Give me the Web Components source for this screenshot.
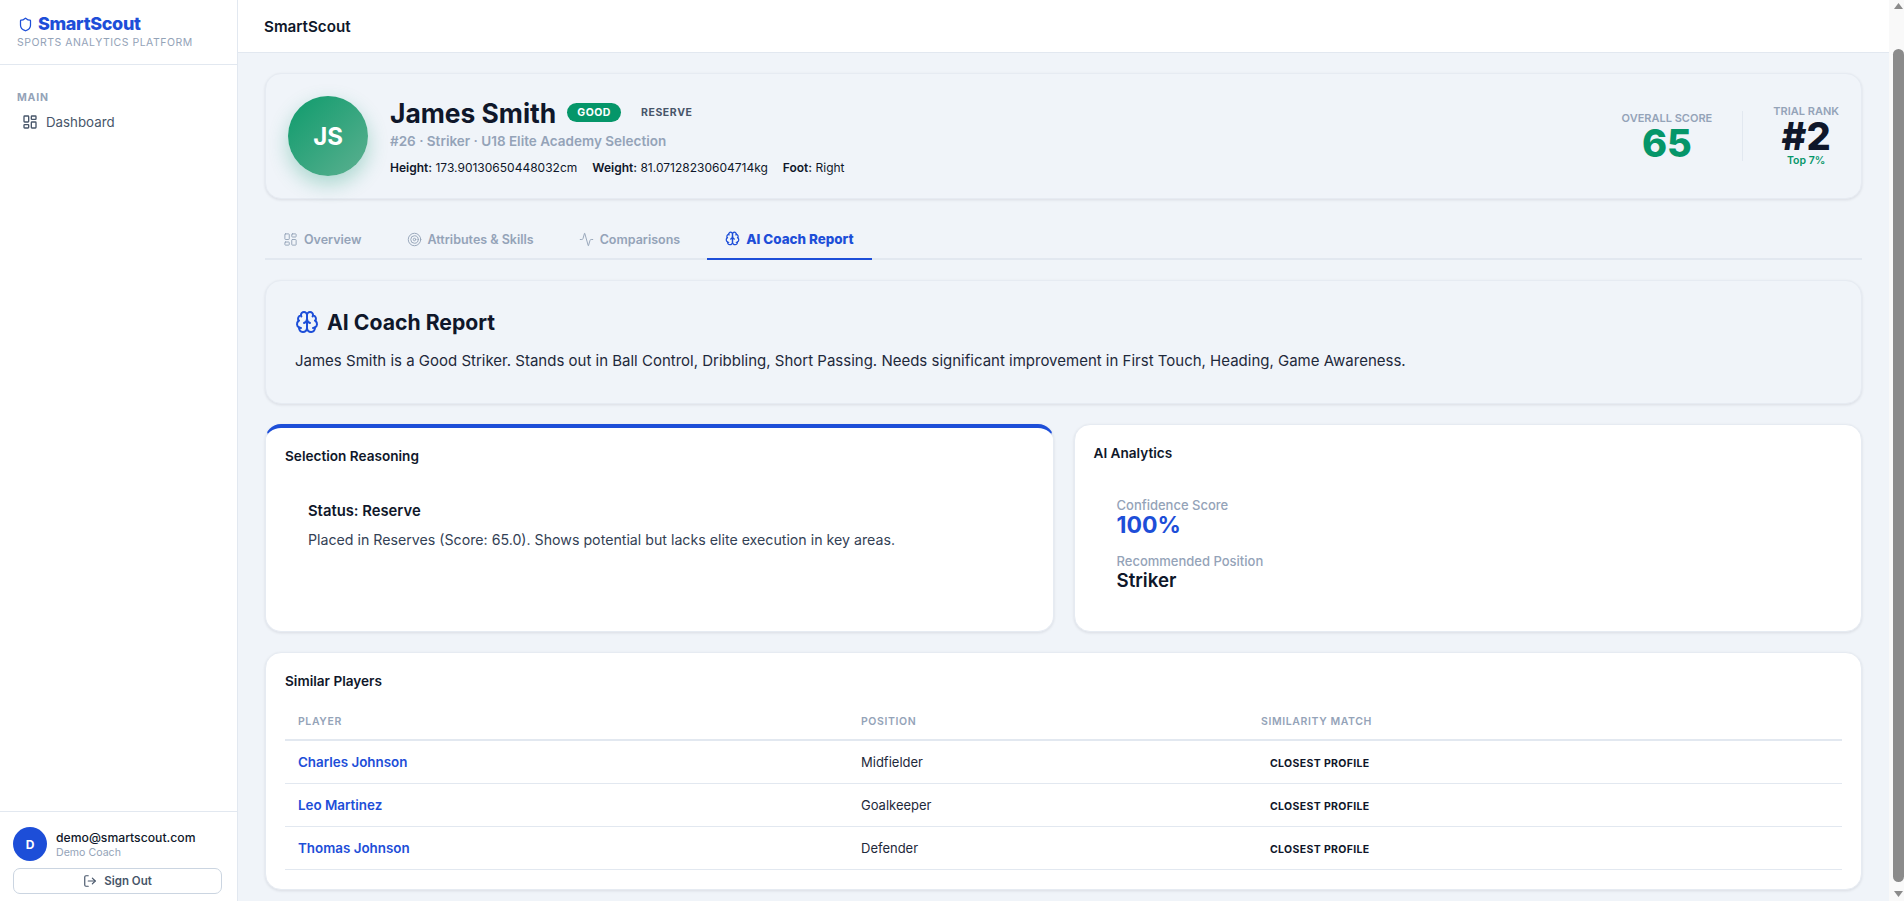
<!DOCTYPE html>
<html lang="en">
<head>
<meta charset="utf-8">
<title>SmartScout</title>
<style>
  html, body { margin: 0; height: 100%; overflow: hidden; }
  body { font-family: Inter, "Liberation Sans", sans-serif; color: #0f172a; background: #f0f4f9; }
</style>
</head>
<body>
<app-shell>
  <app-sidebar slot="side"></app-sidebar>
  <top-bar slot="top">SmartScout</top-bar>
  <scroll-rail slot="rail"></scroll-rail>

  <player-hero></player-hero>
  <tab-bar></tab-bar>

  <report-summary>James Smith is a Good Striker. Stands out in Ball Control, Dribbling, Short Passing. Needs significant improvement in First Touch, Heading, Game Awareness.</report-summary>

  <two-cols>
    <info-card heading="Selection Reasoning" accent>
      <reason-block status="Status: Reserve">Placed in Reserves (Score: 65.0). Shows potential but lacks elite execution in key areas.</reason-block>
    </info-card>
    <info-card heading="AI Analytics">
      <ai-stats></ai-stats>
    </info-card>
  </two-cols>

  <info-card heading="Similar Players">
    <similar-table></similar-table>
  </info-card>
</app-shell>

<script>
// lucide style icons, all on a 24 box
const ICONS = {
  shield: '<path d="M20 13c0 5-3.5 7.5-7.66 8.95a1 1 0 0 1-.67-.01C7.5 20.5 4 18 4 13V6a1 1 0 0 1 1-1c2 0 4.5-1.2 6.24-2.72a1.17 1.17 0 0 1 1.52 0C14.51 3.81 17 5 19 5a1 1 0 0 1 1 1z"/>',
  dashboard: '<rect width="7" height="9" x="3" y="3" rx="1"/><rect width="7" height="5" x="14" y="3" rx="1"/><rect width="7" height="9" x="14" y="12" rx="1"/><rect width="7" height="5" x="3" y="16" rx="1"/>',
  logout: '<path d="m16 17 5-5-5-5"/><path d="M21 12H9"/><path d="M9 21H5a2 2 0 0 1-2-2V5a2 2 0 0 1 2-2h4"/>',
  target: '<circle cx="12" cy="12" r="10"/><circle cx="12" cy="12" r="6"/><circle cx="12" cy="12" r="2"/>',
  activity: '<path d="M22 12h-2.48a2 2 0 0 0-1.93 1.46l-2.35 8.36a.25.25 0 0 1-.48 0L9.24 2.18a.25.25 0 0 0-.48 0l-2.35 8.36A2 2 0 0 1 4.49 12H2"/>',
  brain: '<path d="M12 5a3 3 0 1 0-5.997.125 4 4 0 0 0-2.526 5.77 4 4 0 0 0 .556 6.588A4 4 0 1 0 12 18Z"/><path d="M12 5a3 3 0 1 1 5.997.125 4 4 0 0 1 2.526 5.77 4 4 0 0 1-.556 6.588A4 4 0 1 1 12 18Z"/><path d="M15 13a4.5 4.5 0 0 1-3-4 4.5 4.5 0 0 1-3 4"/><path d="M17.599 6.5a3 3 0 0 0 .399-1.375"/><path d="M6.003 5.125A3 3 0 0 0 6.401 6.5"/><path d="M3.477 10.896a4 4 0 0 1 .585-.396"/><path d="M19.938 10.5a4 4 0 0 1 .585.396"/><path d="M6 18a4 4 0 0 1-1.967-.516"/><path d="M19.967 17.484A4 4 0 0 1 18 18"/>'
};

function icon(name, size, width) {
  return `<svg width="${size}" height="${size}" viewBox="0 0 24 24" fill="none" stroke="currentColor" stroke-width="${width || 2}" stroke-linecap="round" stroke-linejoin="round">${ICONS[name]}</svg>`;
}

// small helper, every element here is just a shadow root with static markup
class Base extends HTMLElement {
  connectedCallback() {
    if (this.shadowRoot) return;
    this.attachShadow({ mode: "open" });
    this.shadowRoot.innerHTML = this.render();
  }
}

class AppShell extends Base {
  render() {
    return `
    <style>
      :host { display: grid; grid-template-columns: 238px 1fr 15px; height: 901px; overflow: hidden; }
      .main { min-width: 0; }
      .content { display: flex; flex-direction: column; gap: 20px; padding: 20px 27px 0; }
    </style>
    <slot name="side"></slot>
    <div class="main">
      <slot name="top"></slot>
      <div class="content"><slot></slot></div>
    </div>
    <slot name="rail"></slot>`;
  }
}

// headless chrome drops native scrollbars, so the bar in the picture is drawn
class ScrollRail extends Base {
  render() {
    return `
    <style>
      :host { display: flex; flex-direction: column; align-items: flex-end; height: 901px; background: #f9f9f9; }
      svg { display: block; flex: none; fill: #8b8b8b; margin-right: 1px; }
      .up { margin-top: 3px; }
      .thumb { width: 11px; height: 833px; margin-top: 40px; border-radius: 6px; background: #8b8b8b; }
      .down { margin-top: 9px; }
    </style>
    <svg class="up" width="9" height="6" viewBox="0 0 9 6"><path d="M4.5 0 9 6H0z"/></svg>
    <div class="thumb"></div>
    <svg class="down" width="9" height="6" viewBox="0 0 9 6"><path d="M0 0h9L4.5 6z"/></svg>`;
  }
}

class AppSidebar extends Base {
  render() {
    return `
    <style>
      :host { display: flex; flex-direction: column; height: 901px; box-sizing: border-box; background: #fff; border-right: 1px solid #e2e8f0; }
      .brand { height: 65px; box-sizing: border-box; border-bottom: 1px solid #e2e8f0; padding: 13px 17px 0 18px; }
      .logo { display: flex; align-items: center; gap: 5px; color: #1d4ed8; font-size: 18px; font-weight: 800; line-height: 22px; letter-spacing: -0.35px; }
      .sub { font-size: 10.5px; line-height: 14px; letter-spacing: 0.5px; color: #94a3b8; margin: 1px 0 0 -1px; }
      nav { flex: 1; padding: 26px 17px 0; }
      .label { font-size: 10.5px; font-weight: 700; letter-spacing: 0.8px; color: #94a3b8; line-height: 14px; }
      .item { display: flex; align-items: center; gap: 8px; margin: 7px 0 0 5px; font-size: 13.3px; line-height: 20px; color: #475569; }
      .user { border-top: 1px solid #e2e8f0; padding: 15px 15px 7px 13px; }
      .who { display: flex; align-items: center; gap: 9px; }
      .avatar { width: 34px; height: 34px; border-radius: 50%; background: #1d4ed8; color: #fff; font-size: 12px; font-weight: 700; display: flex; align-items: center; justify-content: center; }
      .mail { font-size: 12.2px; font-weight: 500; line-height: 16px; }
      .role { font-size: 10.6px; line-height: 13px; color: #94a3b8; }
      .out { display: flex; align-items: center; justify-content: center; gap: 7px; height: 24px; margin-top: 7px; border: 1px solid #cbd5e1; border-radius: 7px; font-size: 11.5px; font-weight: 600; color: #475569; }
    </style>
    <div class="brand">
      <div class="logo">${icon("shield", 15)}SmartScout</div>
      <div class="sub">SPORTS ANALYTICS PLATFORM</div>
    </div>
    <nav>
      <div class="label">MAIN</div>
      <div class="item">${icon("dashboard", 16)}Dashboard</div>
    </nav>
    <div class="user">
      <div class="who">
        <div class="avatar">D</div>
        <div><div class="mail">demo@smartscout.com</div><div class="role">Demo Coach</div></div>
      </div>
      <div class="out">${icon("logout", 14)}Sign Out</div>
    </div>`;
  }
}

class TopBar extends Base {
  render() {
    return `
    <style>
      :host { display: flex; align-items: center; height: 53px; box-sizing: border-box; padding: 0 27px 0 26px; background: #fff; border-bottom: 1px solid #e2e8f0; font-size: 15.2px; font-weight: 600; color: #0f172a; }
    </style>
    <slot></slot>`;
  }
}

class PlayerHero extends Base {
  render() {
    return `
    <style>
      :host { display: flex; align-items: center; height: 126px; box-sizing: border-box; padding: 0 22px; border: 1px solid #e6ebf2; border-radius: 16px; background: #f0f4f9; box-shadow: 0 1px 3px rgba(15,23,42,.1); }
      .avatar { width: 80px; height: 80px; flex: none; border-radius: 50%; background: linear-gradient(135deg, #0e9b6c, #5cb090); color: #fff; font-size: 24px; font-weight: 700; display: flex; align-items: center; justify-content: center; box-shadow: 0 8px 20px rgba(5,150,105,.3); }
      .info { margin-left: 22px; flex: 1; }
      .line { display: flex; align-items: center; }
      h1 { margin: 0; font-size: 26.4px; font-weight: 700; line-height: 34px; color: #0f172a; }
      .good { margin-left: 11px; background: #059669; color: #fff; font-size: 10.5px; font-weight: 700; letter-spacing: .5px; padding: 0 10px; line-height: 19px; border-radius: 10px; }
      .res { margin-left: 20px; font-size: 10.5px; font-weight: 700; letter-spacing: .6px; color: #475569; }
      .meta { font-size: 13.5px; font-weight: 600; line-height: 20px; color: #94a3b8; margin-top: 1px; }
      .facts { display: flex; gap: 15px; font-size: 12px; line-height: 18px; margin-top: 8px; }
      b { font-weight: 600; }
      .stat { text-align: center; }
      .cap { font-size: 11px; font-weight: 600; color: #94a3b8; line-height: 13px; }
      .score { font-size: 38px; font-weight: 800; line-height: 36px; color: #059669; }
      .rank { font-size: 38px; font-weight: 800; line-height: 36px; color: #0f172a; }
      .top { font-size: 10.5px; font-weight: 600; color: #059669; line-height: 12px; margin-top: 1px; }
      .sep { width: 1px; height: 50px; background: #e2e8f0; margin: 0 30px; }
    </style>
    <div class="avatar">JS</div>
    <div class="info">
      <div class="line"><h1>James Smith</h1><span class="good">GOOD</span><span class="res">RESERVE</span></div>
      <div class="meta">#26 · Striker · U18 Elite Academy Selection</div>
      <div class="facts">
        <span><b>Height:</b> 173.90130650448032cm</span>
        <span><b>Weight:</b> 81.07128230604714kg</span>
        <span><b>Foot:</b> Right</span>
      </div>
    </div>
    <div class="stat"><div class="cap">OVERALL SCORE</div><div class="score">65</div></div>
    <div class="sep"></div>
    <div class="stat"><div class="cap">TRIAL RANK</div><div class="rank">#2</div><div class="top">Top 7%</div></div>`;
  }
}

class TabBar extends Base {
  render() {
    return `
    <style>
      :host { display: flex; height: 41px; box-sizing: border-box; border-bottom: 2px solid #e2e8f0; }
      .tab { display: flex; align-items: center; gap: 6px; height: 41px; box-sizing: border-box; padding: 0 18px; font-size: 12.5px; font-weight: 600; color: #94a3b8; }
      .tab + .tab { margin-left: 9px; }
      .on { color: #1d4ed8; border-bottom: 2px solid #1d4ed8; font-size: 13.4px; font-weight: 800; }
    </style>
    <div class="tab">${icon("dashboard", 15, 1.5)}Overview</div>
    <div class="tab">${icon("target", 15, 1.5)}Attributes &amp; Skills</div>
    <div class="tab">${icon("activity", 15, 1.5)}Comparisons</div>
    <div class="tab on">${icon("brain", 15)}AI Coach Report</div>`;
  }
}

class ReportSummary extends Base {
  render() {
    return `
    <style>
      :host { display: block; box-sizing: border-box; height: 124px; padding: 27px 29px; border: 1px solid #e6ebf2; border-radius: 16px; background: #f0f4f9; box-shadow: 0 1px 3px rgba(15,23,42,.1); }
      h2 { display: flex; align-items: center; gap: 8px; margin: 0 0 14px; font-size: 21.2px; font-weight: 700; line-height: 28px; color: #0f172a; }
      h2 svg { color: #1d4ed8; }
      p { margin: 0; font-size: 15px; line-height: 22px; color: #1e293b; }
    </style>
    <h2>${icon("brain", 24)}AI Coach Report</h2>
    <p><slot></slot></p>`;
  }
}

class TwoCols extends Base {
  render() {
    return `
    <style>
      :host { display: grid; grid-template-columns: 1fr 1fr; gap: 20px; }
    </style>
    <slot></slot>`;
  }
}

class InfoCard extends Base {
  render() {
    const accent = this.hasAttribute("accent");
    return `
    <style>
      :host { display: block; box-sizing: border-box; min-height: 208px; padding: 19px; background: #fff; border: 1px solid #e6ebf2; border-radius: 16px; box-shadow: 0 1px 3px rgba(15,23,42,.1); ${accent ? "border-top: 4px solid #1d4ed8;" : ""} }
      h3 { margin: 0; font-size: 13.6px; font-weight: 600; line-height: 18px; color: #0f172a; }
    </style>
    <h3>${this.getAttribute("heading")}</h3>
    <slot></slot>`;
  }
}

class ReasonBlock extends Base {
  render() {
    return `
    <style>
      :host { display: block; padding: 36px 23px 0; }
      .st { font-size: 14.8px; font-weight: 600; line-height: 20px; color: #0f172a; }
      p { margin: 9px 0 0; font-size: 14.2px; line-height: 20px; color: #334155; }
    </style>
    <div class="st">${this.getAttribute("status")}</div>
    <p><slot></slot></p>`;
  }
}

class AiStats extends Base {
  render() {
    return `
    <style>
      :host { display: block; padding: 36px 23px 0; }
      .k { font-size: 13px; font-weight: 500; line-height: 15px; color: #94a3b8; }
      .pct { font-size: 23px; font-weight: 700; line-height: 25px; color: #1d4ed8; margin-bottom: 16px; }
      .pos { font-size: 18.7px; font-weight: 600; line-height: 24px; color: #0f172a; }
    </style>
    <div class="k">Confidence Score</div>
    <div class="pct">100%</div>
    <div class="k">Recommended Position</div>
    <div class="pos">Striker</div>`;
  }
}

class SimilarTable extends Base {
  render() {
    const rows = [
      ["Charles Johnson", "Midfielder"],
      ["Leo Martinez", "Goalkeeper"],
      ["Thomas Johnson", "Defender"]
    ];
    return `
    <style>
      :host { display: block; margin-top: 13px; }
      table { width: 100%; border-collapse: collapse; table-layout: fixed; }
      th { text-align: left; font-size: 10.5px; font-weight: 600; letter-spacing: .6px; color: #94a3b8; padding: 0 13px; height: 36px; border-bottom: 2px solid #e2e8f0; }
      td { font-size: 13px; height: 42px; padding: 0 13px; border-bottom: 1px solid #e2e8f0; color: #1e293b; }
      .p { font-weight: 600; color: #1d4ed8; font-size: 13.4px; }
      .m { font-size: 10.5px; font-weight: 700; letter-spacing: .35px; color: #0f172a; padding-left: 9px; }
    </style>
    <table>
      <colgroup><col style="width:563px"><col style="width:400px"><col></colgroup>
      <thead><tr><th>PLAYER</th><th>POSITION</th><th>SIMILARITY MATCH</th></tr></thead>
      <tbody>
        ${rows.map(r => `<tr><td class="p">${r[0]}</td><td>${r[1]}</td><td><span class="m">CLOSEST PROFILE</span></td></tr>`).join("")}
      </tbody>
    </table>`;
  }
}

customElements.define("app-shell", AppShell);
customElements.define("scroll-rail", ScrollRail);
customElements.define("app-sidebar", AppSidebar);
customElements.define("top-bar", TopBar);
customElements.define("player-hero", PlayerHero);
customElements.define("tab-bar", TabBar);
customElements.define("report-summary", ReportSummary);
customElements.define("two-cols", TwoCols);
customElements.define("info-card", InfoCard);
customElements.define("reason-block", ReasonBlock);
customElements.define("ai-stats", AiStats);
customElements.define("similar-table", SimilarTable);
</script>
</body>
</html>
